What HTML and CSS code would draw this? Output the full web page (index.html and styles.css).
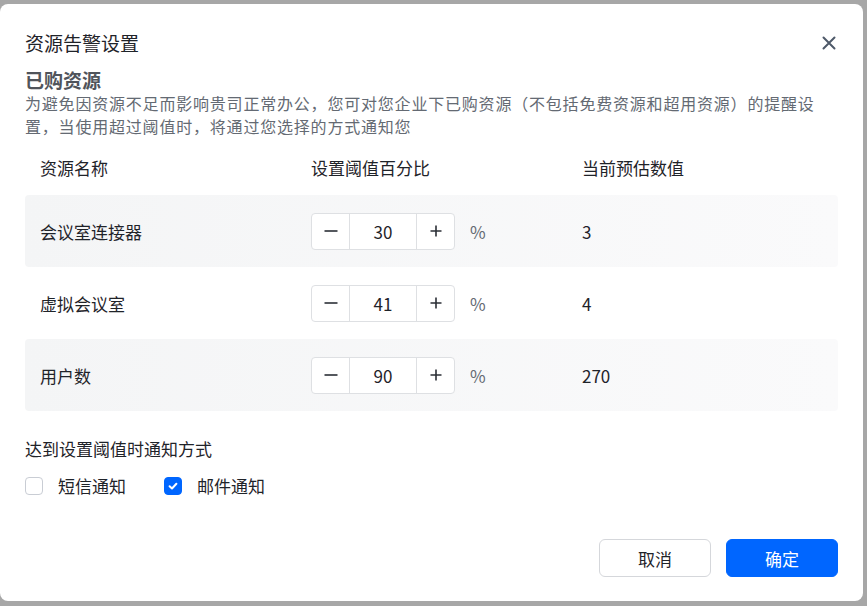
FILE: index.html
```html
<!DOCTYPE html>
<html lang="zh-CN">
<head>
    <meta charset="UTF-8">
    <meta name="viewport" content="width=device-width, initial-scale=1.0">
    <title>资源告警设置</title>
    <link rel="stylesheet" href="styles.css">
</head>
<body>
    <div class="dialog">
        <div class="dialog-header">
            <h2 class="dialog-title">资源告警设置</h2>
            <button class="close-btn" aria-label="关闭">
                <svg width="14" height="14" viewBox="0 0 14 14"><path d="M1.5 1.5 L12.5 12.5 M12.5 1.5 L1.5 12.5" stroke="#4e5969" stroke-width="2" stroke-linecap="round" fill="none"/></svg>
            </button>
        </div>

        <h3 class="section-title">已购资源</h3>
        <p class="section-desc">为避免因资源不足而影响贵司正常办公，您可对您企业下已购资源（不包括免费资源和超用资源）的提醒设<br>置，当使用超过阈值时，将通过您选择的方式通知您</p>

        <div class="table">
            <div class="table-head">
                <div>资源名称</div>
                <div>设置阈值百分比</div>
                <div>当前预估数值</div>
            </div>
            <div class="table-row striped">
                <div>会议室连接器</div>
                <div class="threshold">
                    <div class="stepper">
                        <button class="step"><svg width="14" height="14" viewBox="0 0 14 14"><path d="M0.5 7 H13.5" stroke="#2b2f36" stroke-width="1.6"/></svg></button>
                        <input class="step-value" type="text" value="30">
                        <button class="step"><svg width="12" height="12" viewBox="0 0 12 12"><path d="M0.5 6 H11.5 M6 0.5 V11.5" stroke="#2b2f36" stroke-width="1.6"/></svg></button>
                    </div>
                    <span class="percent">%</span>
                </div>
                <div>3</div>
            </div>
            <div class="table-row">
                <div>虚拟会议室</div>
                <div class="threshold">
                    <div class="stepper">
                        <button class="step"><svg width="14" height="14" viewBox="0 0 14 14"><path d="M0.5 7 H13.5" stroke="#2b2f36" stroke-width="1.6"/></svg></button>
                        <input class="step-value" type="text" value="41">
                        <button class="step"><svg width="12" height="12" viewBox="0 0 12 12"><path d="M0.5 6 H11.5 M6 0.5 V11.5" stroke="#2b2f36" stroke-width="1.6"/></svg></button>
                    </div>
                    <span class="percent">%</span>
                </div>
                <div>4</div>
            </div>
            <div class="table-row striped">
                <div>用户数</div>
                <div class="threshold">
                    <div class="stepper">
                        <button class="step"><svg width="14" height="14" viewBox="0 0 14 14"><path d="M0.5 7 H13.5" stroke="#2b2f36" stroke-width="1.6"/></svg></button>
                        <input class="step-value" type="text" value="90">
                        <button class="step"><svg width="12" height="12" viewBox="0 0 12 12"><path d="M0.5 6 H11.5 M6 0.5 V11.5" stroke="#2b2f36" stroke-width="1.6"/></svg></button>
                    </div>
                    <span class="percent">%</span>
                </div>
                <div>270</div>
            </div>
        </div>

        <div class="notify-label">达到设置阈值时通知方式</div>
        <div class="notify-options">
            <label class="check">
                <span class="box"></span>
                短信通知
            </label>
            <label class="check">
                <span class="box checked">
                    <svg width="12" height="12" viewBox="0 0 12 12"><path d="M2.6 6.2 L5 8.5 L9.4 3.8" stroke="#fff" stroke-width="2" fill="none" stroke-linecap="round" stroke-linejoin="round"/></svg>
                </span>
                邮件通知
            </label>
        </div>

        <div class="dialog-footer">
            <button class="btn btn-cancel">取消</button>
            <button class="btn btn-primary">确定</button>
        </div>
    </div>
</body>
</html>
```

FILE: styles.css
```css
body {
    margin: 0;
    background: #a7a7a7;
    font-family: "Noto Sans CJK SC", "Noto Sans", sans-serif;
    color: #1f2329;
    height: 606px;
    overflow: hidden;
}
.dialog {
    width: 863px;
    height: 597px;
    margin-top: 4px;
    background: #fff;
    border-radius: 8px;
    box-sizing: border-box;
    padding: 25px 25px 24px 25px;
    display: flex;
    flex-direction: column;
}
.dialog-header {
    display: flex;
    justify-content: space-between;
    align-items: center;
    height: 28px;
}
.dialog-title {
    margin: 0;
    font-size: 19px;
    font-weight: normal;
    line-height: 28px;
}
.close-btn {
    border: none;
    background: none;
    padding: 0;
    width: 14px;
    height: 14px;
    margin-right: 2px;
    cursor: pointer;
}
.close-btn svg {
    display: block;
}
.section-title {
    margin: 11px 0 0;
    font-size: 19px;
    font-weight: bold;
    line-height: 24px;
    color: #50545b;
}
.section-desc {
    margin: 0;
    font-size: 16px;
    letter-spacing: 0.8px;
    line-height: 23px;
    color: #646a73;
}
.table {
    margin-top: 18px;
}
.table-head,
.table-row {
    display: grid;
    grid-template-columns: 271px 271px 1fr;
    padding-left: 15px;
    align-items: center;
    font-size: 17px;
}
.table-head {
    line-height: 24px;
    margin-bottom: 15px;
}
.table-row {
    height: 72px;
}
.striped {
    background: linear-gradient(90deg, #f4f5f6, #fafafb);
    border-radius: 4px;
}
.threshold {
    display: flex;
    align-items: center;
}
.stepper {
    display: flex;
    height: 37px;
    border: 1px solid #dee0e3;
    border-radius: 4px;
    background: #fff;
    box-sizing: border-box;
}
.step {
    width: 37px;
    border: none;
    background: none;
    padding: 0;
    display: flex;
    align-items: center;
    justify-content: center;
    cursor: pointer;
}
.step-value {
    width: 68px;
    box-sizing: border-box;
    border: none;
    border-left: 1px solid #dee0e3;
    border-right: 1px solid #dee0e3;
    text-align: center;
    font-size: 17px;
    font-family: inherit;
    color: #1f2329;
    padding: 0;
    outline: none;
}
.percent {
    margin-left: 15px;
    color: #646a73;
}
.notify-label {
    margin-top: 26px;
    font-size: 17px;
    line-height: 24px;
}
.notify-options {
    display: flex;
    gap: 38px;
    margin-top: 13px;
}
.check {
    display: flex;
    align-items: center;
    gap: 15px;
    font-size: 17px;
    line-height: 24px;
    cursor: pointer;
}
.box {
    width: 18px;
    height: 18px;
    box-sizing: border-box;
    border: 1px solid #c9cdd4;
    border-radius: 4px;
    background: #fff;
    display: flex;
    align-items: center;
    justify-content: center;
}
.box.checked {
    background: #0066ff;
    border-color: #0066ff;
}
.dialog-footer {
    margin-top: auto;
    display: flex;
    justify-content: flex-end;
    gap: 15px;
}
.btn {
    width: 112px;
    height: 38px;
    border-radius: 6px;
    font-size: 17px;
    font-family: inherit;
    cursor: pointer;
}
.btn-cancel {
    background: #fff;
    border: 1px solid #d5d7db;
    color: #1f2329;
}
.btn-primary {
    background: #0066ff;
    border: 1px solid #0066ff;
    color: #fff;
}
```
